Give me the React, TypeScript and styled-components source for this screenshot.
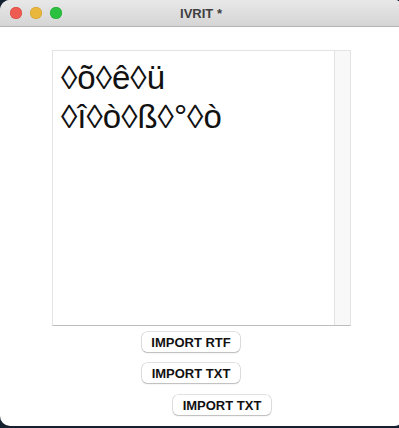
import { createGlobalStyle, styled } from "styled-components";

const GlobalStyle = createGlobalStyle`
    html, body {
        margin: 0;
        padding: 0;
        background: #15202e;
        overflow: hidden;
    }
`;

const Window = styled.div`
    width: 404px;
    height: 426px;
    background: #ffffff;
    border-radius: 10px;
    overflow: hidden;
    display: flex;
    flex-direction: column;
    font-family: "Liberation Sans", Arial, sans-serif;
`;

const TitleBar = styled.div`
    position: relative;
    height: 26px;
    flex-shrink: 0;
    display: flex;
    align-items: center;
    justify-content: center;
    background: linear-gradient(#e8e8e8, #d5d5d5);
    border-bottom: 1px solid #b3b3b3;
`;

const Lights = styled.div`
    position: absolute;
    left: 10px;
    top: 7px;
    display: flex;
    gap: 8px;
`;

const Light = styled.span<{ $color: string; $edge: string }>`
    width: 12px;
    height: 12px;
    border-radius: 50%;
    background: ${(p) => p.$color};
    box-shadow: inset 0 0 0 0.5px ${(p) => p.$edge};
`;

const Title = styled.div`
    margin-left: -2px;
    font-size: 13px;
    font-weight: bold;
    color: #3f3f3f;
`;

const Content = styled.div`
    padding: 23px 0 0 52px;
    display: flex;
    flex-direction: column;
`;

const TextBox = styled.div`
    width: 297px;
    height: 274px;
    display: flex;
    border: 1px solid #e3e3e3;
    border-bottom-color: #bdbdbd;
`;

const Editor = styled.div`
    flex: 1;
    padding: 7px 0 0 8px;
    font-family: "Liberation Sans", Arial, sans-serif;
    font-size: 33px;
    line-height: 39px;
    color: #111;
`;

const Scrollbar = styled.div`
    width: 15px;
    background: #f8f8f8;
    border-left: 1px solid #e4e4e4;
`;

const Buttons = styled.div`
    display: flex;
    flex-direction: column;
    align-items: flex-start;
    padding-top: 6px;
`;

const Button = styled.button<{ $offset: number; $gap: number }>`
    margin-left: ${(p) => p.$offset}px;
    margin-bottom: ${(p) => p.$gap}px;
    width: 98px;
    height: 20px;
    padding: 0;
    border: none;
    border-radius: 5px;
    background: #ffffff;
    box-shadow: 0 0 0 0.5px rgba(0, 0, 0, 0.22), 0 1px 1.5px rgba(0, 0, 0, 0.18);
    font-family: "Liberation Sans", Arial, sans-serif;
    font-size: 13px;
    font-weight: bold;
    color: #111;
`;

export default function App() {
    return <>
        <GlobalStyle />
        <Window>
            <TitleBar>
                <Lights>
                    <Light $color="#ee5b53" $edge="#d3443d" />
                    <Light $color="#e8b73c" $edge="#cf9c2a" />
                    <Light $color="#2bc13f" $edge="#1ea630" />
                </Lights>
                <Title>IVRIT *</Title>
            </TitleBar>
            <Content>
                <TextBox>
                    <Editor>
                        <div>◊õ◊ê◊ü</div>
                        <div>◊î◊ò◊ß◊°◊ò</div>
                    </Editor>
                    <Scrollbar />
                </TextBox>
                <Buttons>
                    <Button $offset={90} $gap={11}>IMPORT RTF</Button>
                    <Button $offset={90} $gap={12}>IMPORT TXT</Button>
                    <Button $offset={121} $gap={0}>IMPORT TXT</Button>
                </Buttons>
            </Content>
        </Window>
    </>;
}
